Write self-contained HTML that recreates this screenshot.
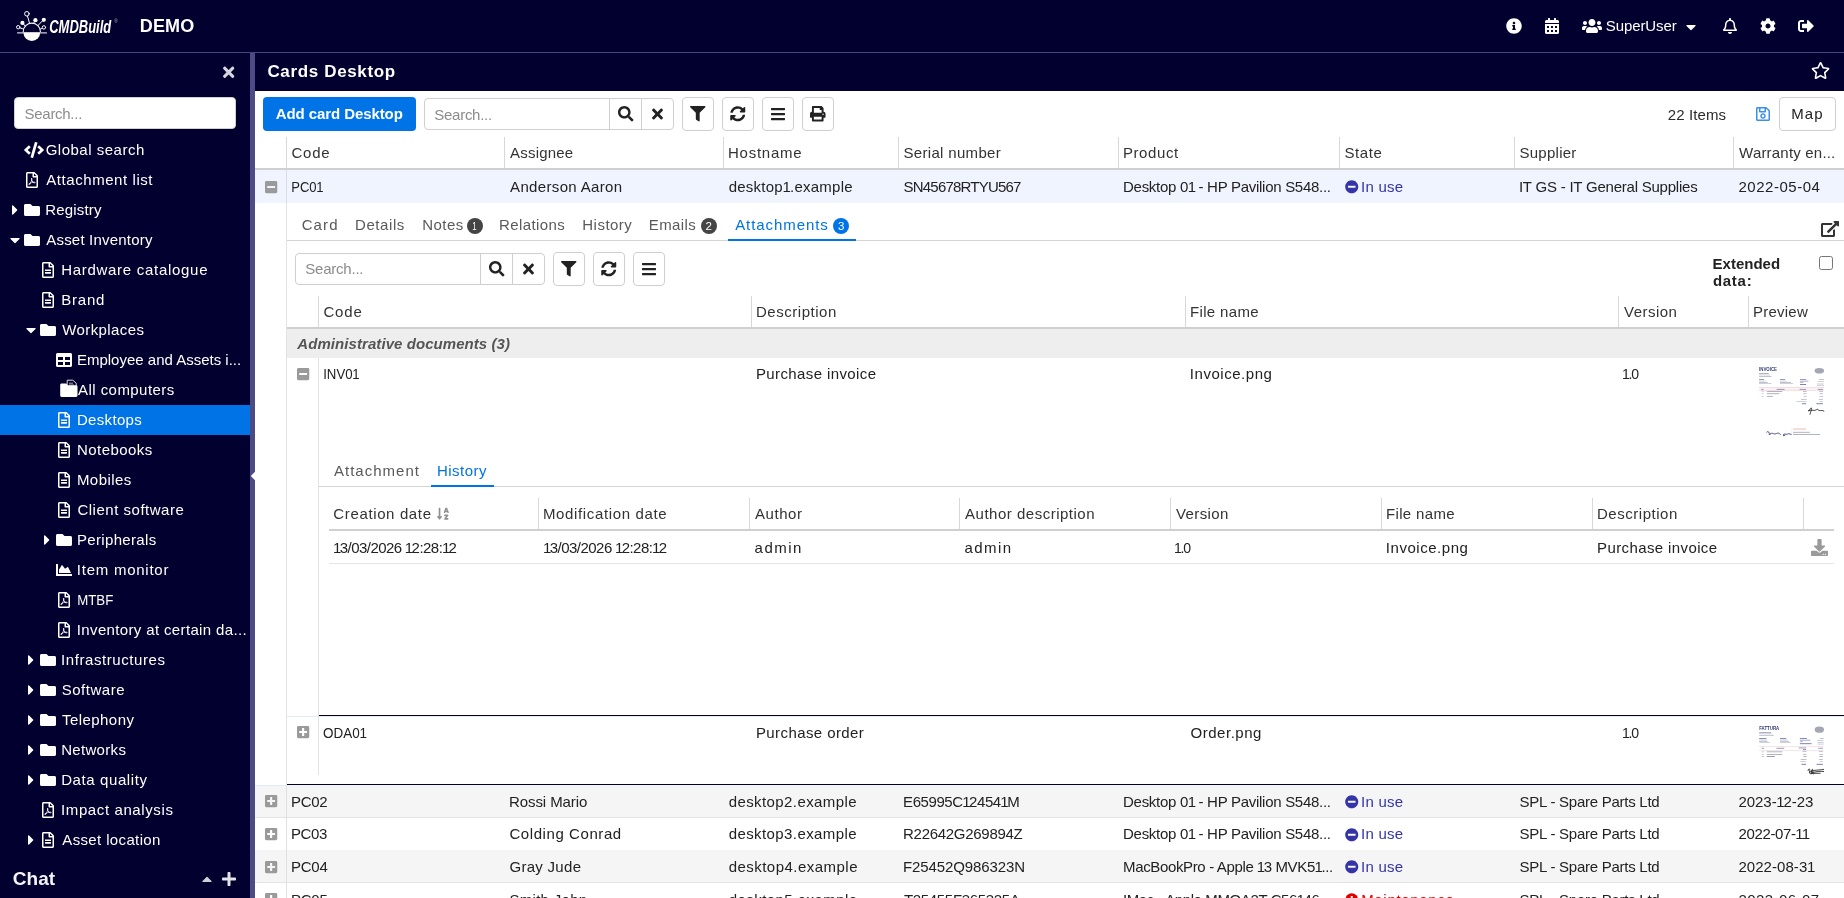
<!DOCTYPE html>
<html lang="en"><head><meta charset="utf-8"><title>CMDBuild - Cards Desktop</title>
<style>
html,body{margin:0;padding:0;}
body{width:1844px;height:898px;overflow:hidden;position:relative;background:#fff;font-family:"Liberation Sans",sans-serif;font-size:15px;color:#222;}
.b{position:absolute;box-sizing:border-box;}
.i{position:absolute;display:block;overflow:visible;}
.t{position:absolute;white-space:nowrap;line-height:20px;height:20px;letter-spacing:var(--ls,0px);}
.n1{letter-spacing:calc(var(--ls,0px) - 1.1px);margin-left:-0.4px;}
.btn{position:absolute;box-sizing:border-box;border:1px solid #cfcfcf;border-radius:4px;background:#fff;}
#app{position:absolute;left:0;top:0;width:1844px;height:898px;overflow:hidden;will-change:transform;}

</style></head>
<body>
<div id="app">
<div class="b" style="left:0px;top:0px;width:1844px;height:52px;background:#02002e;"></div>
<div class="b" style="left:0px;top:52px;width:1844px;height:1px;background:#45447f;"></div>
<svg class="i" style="left:13px;top:8px" width="38" height="36" viewBox="0 0 38 36">
<g stroke="#fff" stroke-width="1" fill="none" stroke-linecap="round" transform="translate(0,0.5)">
<path d="M10.2 23.2A8.6 8.6 0 0 1 27.4 23.2" stroke-width="1.1"/>
<line x1="4.5" y1="24.4" x2="33.5" y2="24.4" stroke-width="1.1" stroke="#cfcfdc"/>
<line x1="16.6" y1="14.9" x2="14.2" y2="6.6"/>
<line x1="20.6" y1="14.6" x2="22" y2="12.4"/>
<line x1="24.8" y1="17.2" x2="29.6" y2="12.2"/>
<line x1="12.2" y1="17.6" x2="10.4" y2="15.4"/>
<line x1="10.6" y1="20.6" x2="6.4" y2="19.2"/>
<line x1="27" y1="20.8" x2="29.6" y2="19.6"/>
<circle cx="13.9" cy="5.3" r="2.3" fill="#02002e"/>
<circle cx="5.2" cy="18.7" r="1.7" fill="#02002e"/>
<circle cx="30.9" cy="18.9" r="1.7" fill="#02002e"/>
</g>
<g fill="#fff">
<path d="M10.4 24.2A8.4 8.4 0 0 0 27.2 24.2Z" transform="translate(0,0.4)"/>
<circle cx="9.4" cy="14.9" r="2.1"/>
<circle cx="22.4" cy="12.2" r="2.1"/>
<circle cx="30.8" cy="11.8" r="2.1"/>
</g></svg>
<span class="t logo" id="t0" style="top:17px;font-size:18px;font-weight:700;color:#fff;font-style:italic;transform-origin:0 50%;left:49.42px;transform:scaleX(0.7204);transform-origin:0.88px 50%;">CMDBuild</span>
<span class="t" id="t1" style="top:12px;font-size:4.5px;color:#bbb;left:114.20px;">®</span>
<span class="t" id="t2" style="top:16px;font-size:18px;font-weight:700;color:#fff;left:139.75px;--ls:0.167px;">DEMO</span>
<svg class="i" style="left:1506px;top:18px;" width="16" height="16" viewBox="0 0 512 512" preserveAspectRatio="none"><path fill="#fff" d="M256 8C119.043 8 8 119.083 8 256c0 136.997 111.043 248 248 248s248-111.003 248-248C504 119.083 392.957 8 256 8zm0 110c23.196 0 42 18.804 42 42s-18.804 42-42 42-42-18.804-42-42 18.804-42 42-42zm56 254c0 6.627-5.373 12-12 12h-88c-6.627 0-12-5.373-12-12v-24c0-6.627 5.373-12 12-12h12v-64h-12c-6.627 0-12-5.373-12-12v-24c0-6.627 5.373-12 12-12h64c6.627 0 12 5.373 12 12v100h12c6.627 0 12 5.373 12 12v24z"/></svg>
<svg class="i" style="left:1545px;top:18px;" width="14" height="16" viewBox="0 0 448 512" preserveAspectRatio="none"><path fill="#fff" d="M0 464c0 26.500 21.500 48 48 48h352c26.500 0 48-21.500 48-48V192H0v272zm320-196c0-6.600 5.400-12 12-12h40c6.600 0 12 5.400 12 12v40c0 6.600-5.400 12-12 12h-40c-6.600 0-12-5.400-12-12v-40zm0 128c0-6.600 5.400-12 12-12h40c6.600 0 12 5.400 12 12v40c0 6.600-5.400 12-12 12h-40c-6.600 0-12-5.400-12-12v-40zM192 268c0-6.600 5.400-12 12-12h40c6.600 0 12 5.400 12 12v40c0 6.600-5.400 12-12 12h-40c-6.600 0-12-5.400-12-12v-40zm0 128c0-6.600 5.400-12 12-12h40c6.600 0 12 5.400 12 12v40c0 6.600-5.400 12-12 12h-40c-6.600 0-12-5.400-12-12v-40zM64 268c0-6.600 5.400-12 12-12h40c6.600 0 12 5.400 12 12v40c0 6.600-5.400 12-12 12H76c-6.600 0-12-5.400-12-12v-40zm0 128c0-6.600 5.400-12 12-12h40c6.600 0 12 5.400 12 12v40c0 6.600-5.400 12-12 12H76c-6.600 0-12-5.400-12-12v-40zM400 64h-48V16c0-8.800-7.200-16-16-16h-32c-8.800 0-16 7.200-16 16v48H160V16c0-8.800-7.200-16-16-16h-32c-8.800 0-16 7.200-16 16v48H48C21.500 64 0 85.500 0 112v48h448v-48c0-26.500-21.500-48-48-48z"/></svg>
<svg class="i" style="left:1581.5px;top:18px;" width="20" height="16" viewBox="0 0 640 512" preserveAspectRatio="none"><path fill="#fff" d="M96 224c35.300 0 64-28.700 64-64s-28.700-64-64-64-64 28.700-64 64 28.700 64 64 64zm448 0c35.300 0 64-28.700 64-64s-28.700-64-64-64-64 28.700-64 64 28.700 64 64 64zm32 32h-64c-17.600 0-33.500 7.100-45.100 18.600 40.300 22.100 68.900 62 75.100 109.400h66c17.700 0 32-14.300 32-32v-32c0-35.300-28.700-64-64-64zm-256 0c61.900 0 112-50.100 112-112S381.900 32 320 32 208 82.100 208 144s50.100 112 112 112zm76.800 32h-8.300c-20.800 10-43.900 16-68.500 16s-47.600-6-68.500-16h-8.300C179.600 288 128 339.600 128 403.200V432c0 26.500 21.500 48 48 48h288c26.500 0 48-21.500 48-48v-28.800c0-63.600-51.600-115.200-115.200-115.200zm-223.700-13.400C161.500 263.100 145.600 256 128 256H64c-35.300 0-64 28.700-64 64v32c0 17.700 14.300 32 32 32h65.900c6.300-47.400 34.900-87.300 75.200-109.400z"/></svg>
<span class="t" id="t3" style="top:16px;color:#fff;left:1605.75px;--ls:-0.094px;">SuperUser</span>
<svg class="i" style="left:1686px;top:18.5px;" width="10" height="16" viewBox="0 0 320 512" preserveAspectRatio="none"><path fill="#fff" d="M31.3 192h257.300c17.800 0 26.700 21.500 14.100 34.100L174.100 354.800c-7.800 7.800-20.500 7.800-28.300 0L17.200 226.100C4.600 213.500 13.500 192 31.300 192z"/></svg>
<svg class="i" style="left:1722.5px;top:18px;" width="14" height="16" viewBox="0 0 448 512" preserveAspectRatio="none"><path fill="#fff" d="M439.390 362.290c-19.320-20.760-55.470-51.990-55.470-154.290 0-77.700-54.480-139.900-127.940-155.160V32c0-17.670-14.320-32-31.980-32s-31.980 14.330-31.980 32v20.840C118.560 68.100 64.080 130.300 64.080 208c0 102.300-36.150 133.530-55.470 154.290-6 6.450-8.660 14.160-8.610 21.710.110 16.400 12.980 32 32.100 32h383.800c19.120 0 32-15.600 32.100-32 .050-7.550-2.610-15.270-8.610-21.710zM67.530 368c21.220-27.970 44.420-74.330 44.530-159.420 0-.2-.060-.380-.060-.580 0-61.860 50.140-112 112-112s112 50.140 112 112c0 .2-.060.380-.060.580.110 85.100 23.310 131.460 44.530 159.420H67.530zM224 512c35.320 0 63.970-28.650 63.970-64H160.030c0 35.350 28.650 64 63.970 64z"/></svg>
<svg class="i" style="left:1759.5px;top:18px;" width="16" height="16" viewBox="0 0 512 512" preserveAspectRatio="none"><path fill="#fff" d="M487.400 315.700l-42.600-24.600c4.300-23.200 4.300-47 0-70.200l42.600-24.600c4.900-2.800 7.100-8.600 5.500-14-11.100-35.600-30-67.800-54.700-94.600-3.800-4.100-10-5.100-14.800-2.300L380.800 110c-17.900-15.400-38.500-27.300-60.800-35.100V25.800c0-5.600-3.900-10.500-9.400-11.700-36.700-8.200-74.300-7.800-109.200 0-5.500 1.200-9.400 6.100-9.400 11.700V75c-22.200 7.900-42.800 19.800-60.800 35.100L88.700 85.500c-4.900-2.800-11-1.900-14.800 2.300-24.700 26.700-43.600 58.900-54.700 94.600-1.700 5.400.6 11.200 5.500 14L67.300 221c-4.300 23.200-4.300 47 0 70.200l-42.600 24.600c-4.900 2.800-7.100 8.600-5.500 14 11.100 35.600 30 67.800 54.700 94.600 3.800 4.100 10 5.100 14.800 2.300l42.600-24.600c17.900 15.400 38.500 27.300 60.800 35.100v49.200c0 5.600 3.900 10.500 9.400 11.700 36.700 8.200 74.300 7.800 109.200 0 5.500-1.200 9.400-6.100 9.400-11.700v-49.200c22.200-7.900 42.800-19.800 60.800-35.100l42.600 24.600c4.900 2.800 11 1.900 14.800-2.300 24.700-26.700 43.600-58.900 54.700-94.600 1.500-5.500-.7-11.300-5.600-14.100zM256 336c-44.100 0-80-35.900-80-80s35.900-80 80-80 80 35.900 80 80-35.900 80-80 80z"/></svg>
<svg class="i" style="left:1797.5px;top:18px;" width="16" height="16" viewBox="0 0 512 512" preserveAspectRatio="none"><path fill="#fff" d="M497 273L329 441c-15 15-41 4.500-41-17v-96H152c-13.300 0-24-10.700-24-24v-96c0-13.300 10.700-24 24-24h136V88c0-21.400 25.900-32 41-17l168 168c9.300 9.400 9.300 24.600 0 34zM192 436v-40c0-6.600-5.400-12-12-12H96c-17.700 0-32-14.300-32-32V160c0-17.700 14.300-32 32-32h84c6.600 0 12-5.400 12-12V76c0-6.600-5.400-12-12-12H96c-53 0-96 43-96 96v192c0 53 43 96 96 96h84c6.600 0 12-5.400 12-12z"/></svg>
<div class="b" style="left:0px;top:53px;width:250px;height:845px;background:#02002e;"></div>
<div class="b" style="left:250px;top:53px;width:5px;height:845px;background:#4d4b86;"></div>
<svg class="i" style="left:250px;top:471px" width="5" height="10" viewBox="0 0 5 10"><path d="M0.800 5L5 0.800V9.200Z" fill="#fff"/></svg>
<svg class="i" style="left:222.928px;top:63.95px;" width="11.3438" height="16.5" viewBox="0 0 352 512" preserveAspectRatio="none"><path fill="#d6d6de" d="M242.72 256l100.07-100.07c12.28-12.28 12.28-32.19 0-44.48l-22.24-22.24c-12.28-12.28-32.19-12.28-44.48 0L176 189.28 75.93 89.21c-12.28-12.28-32.19-12.28-44.48 0L9.21 111.45c-12.28 12.28-12.28 32.19 0 44.48L109.28 256 9.21 356.07c-12.28 12.28-12.28 32.19 0 44.48l22.24 22.24c12.28 12.28 32.2 12.28 44.48 0L176 322.72l100.07 100.07c12.28 12.28 32.2 12.28 44.48 0l22.24-22.24c12.28-12.28 12.28-32.19 0-44.48L242.72 256z"/></svg>
<div class="b" style="left:14px;top:97px;width:222px;height:32px;background:#fff;border:1px solid #d0d0d0;border-radius:4px;"></div>
<span class="t" id="t4" style="top:104px;color:#8c8c8c;left:24.55px;--ls:-0.284px;">Search...</span>
<svg class="i" style="left:24px;top:142px;" width="20" height="16" viewBox="0 0 640 512" preserveAspectRatio="none"><path fill="#fff" d="M278.900 511.500l-61-17.700c-6.400-1.800-10-8.500-8.200-14.900L346.200 8.700c1.800-6.400 8.500-10 14.900-8.200l61 17.700c6.400 1.800 10 8.500 8.200 14.900L293.800 503.300c-1.900 6.400-8.500 10.100-14.900 8.200zm-114-112.200l43.500-46.400c4.600-4.900 4.300-12.700-.8-17.200L117 256l90.600-79.700c5.100-4.500 5.500-12.300.8-17.200l-43.500-46.400c-4.500-4.800-12.100-5.100-17-.5L3.800 247.200c-5.100 4.700-5.100 12.800 0 17.500l144.100 135.100c4.900 4.600 12.500 4.400 17-.5zm327.200.6l144.100-135.100c5.100-4.700 5.100-12.800 0-17.500L492.100 112.100c-4.800-4.500-12.400-4.300-17 .5L431.600 159c-4.600 4.900-4.300 12.700.8 17.200L523 256l-90.600 79.700c-5.100 4.500-5.500 12.300-.8 17.200l43.500 46.400c4.500 4.900 12.100 5.100 17 .6z"/></svg>
<span class="t" id="t5" style="top:140px;color:#fff;left:45.65px;--ls:0.510px;">Global search</span>
<svg class="i" style="left:26px;top:172px;" width="12" height="16" viewBox="0 0 384 512" preserveAspectRatio="none"><path fill="#fff" d="M369.900 97.900L286 14C277 5 264.800-.1 252.100-.1H48C21.500 0 0 21.500 0 48v416c0 26.500 21.500 48 48 48h288c26.500 0 48-21.500 48-48V131.900c0-12.700-5.100-25-14.100-34zM332.100 128H256V51.900l76.100 76.100zM48 464V48h160v104c0 13.300 10.700 24 24 24h104v288H48zm250.200-143.700c-12.200-12-47-8.700-64.400-6.500-17.200-10.500-28.700-25-36.800-46.300 3.900-16.100 10.100-40.600 5.400-56-4.200-26.200-37.800-23.600-42.600-5.900-4.400 16.100-.4 38.500 7 67.100-10 23.900-24.900 56-35.400 74.400-20 10.300-47 26.200-51 46.200-3.300 15.800 26 55.200 76.100-31.200 22.400-7.400 46.800-16.500 68.400-20.100 18.900 10.200 41 17 55.800 17 25.500 0 28-28.200 17.500-38.700zm-198.100 77.800c5.100-13.700 24.500-29.500 30.400-35-19 30.300-30.400 35.700-30.400 35zm81.600-190.600c7.400 0 6.700 32.100 1.800 40.800-4.400-13.900-4.300-40.800-1.800-40.800zm-24.400 136.600c9.700-16.900 18-37 24.700-54.700 8.300 15.100 18.900 27.200 30.100 35.500-20.800 4.300-38.900 13.100-54.800 19.200zm131.600-5s-5 6-37.300-7.800c35.100-2.600 40.900 5.400 37.300 7.800z"/></svg>
<span class="t" id="t6" style="top:170px;color:#fff;left:46.27px;--ls:0.562px;">Attachment list</span>
<svg class="i" style="left:11.5px;top:202px;" width="6" height="16" viewBox="0 0 192 512" preserveAspectRatio="none"><path fill="#fff" d="M0 384.662V127.338c0-17.818 21.543-26.741 34.142-14.142l128.662 128.662c7.810 7.810 7.810 20.474 0 28.284L34.142 398.804C21.543 411.404 0 402.480 0 384.662z"/></svg>
<svg class="i" style="left:24px;top:202px;" width="16" height="16" viewBox="0 0 512 512" preserveAspectRatio="none"><path fill="#fff" d="M464 128H272l-64-64H48C21.490 64 0 85.490 0 112v288c0 26.510 21.490 48 48 48h416c26.510 0 48-21.490 48-48V176c0-26.510-21.490-48-48-48z"/></svg>
<span class="t" id="t7" style="top:200px;color:#fff;left:45.15px;--ls:0.179px;">Registry</span>
<svg class="i" style="left:10px;top:231.5px;" width="10" height="16" viewBox="0 0 320 512" preserveAspectRatio="none"><path fill="#fff" d="M31.3 192h257.300c17.800 0 26.700 21.500 14.100 34.100L174.100 354.800c-7.800 7.800-20.500 7.800-28.300 0L17.200 226.100C4.600 213.500 13.500 192 31.300 192z"/></svg>
<svg class="i" style="left:24px;top:232px;" width="16" height="16" viewBox="0 0 512 512" preserveAspectRatio="none"><path fill="#fff" d="M464 128H272l-64-64H48C21.490 64 0 85.490 0 112v288c0 26.510 21.490 48 48 48h416c26.510 0 48-21.490 48-48V176c0-26.510-21.490-48-48-48z"/></svg>
<span class="t" id="t8" style="top:230px;color:#fff;left:46.27px;--ls:0.196px;">Asset Inventory</span>
<svg class="i" style="left:42px;top:262px;" width="12" height="16" viewBox="0 0 384 512" preserveAspectRatio="none"><path fill="#fff" d="M288 248v28c0 6.600-5.400 12-12 12H108c-6.600 0-12-5.400-12-12v-28c0-6.600 5.400-12 12-12h168c6.600 0 12 5.400 12 12zm-12 72H108c-6.600 0-12 5.400-12 12v28c0 6.600 5.400 12 12 12h168c6.600 0 12-5.400 12-12v-28c0-6.600-5.400-12-12-12zm108-188.100V464c0 26.500-21.500 48-48 48H48c-26.500 0-48-21.500-48-48V48C0 21.500 21.500 0 48 0h204.100C264.800 0 277 5.100 286 14.100L369.900 98c9 8.900 14.100 21.200 14.100 33.900zm-128-80V128h76.100L256 51.900zM336 464V176H232c-13.300 0-24-10.700-24-24V48H48v416h288z"/></svg>
<span class="t" id="t9" style="top:260px;color:#fff;left:61.15px;--ls:0.713px;">Hardware catalogue</span>
<svg class="i" style="left:42px;top:292px;" width="12" height="16" viewBox="0 0 384 512" preserveAspectRatio="none"><path fill="#fff" d="M288 248v28c0 6.600-5.400 12-12 12H108c-6.600 0-12-5.400-12-12v-28c0-6.600 5.400-12 12-12h168c6.600 0 12 5.400 12 12zm-12 72H108c-6.600 0-12 5.400-12 12v28c0 6.600 5.400 12 12 12h168c6.600 0 12-5.400 12-12v-28c0-6.600-5.400-12-12-12zm108-188.100V464c0 26.500-21.500 48-48 48H48c-26.500 0-48-21.500-48-48V48C0 21.500 21.500 0 48 0h204.100C264.800 0 277 5.100 286 14.100L369.900 98c9 8.900 14.100 21.200 14.100 33.900zm-128-80V128h76.100L256 51.900zM336 464V176H232c-13.300 0-24-10.700-24-24V48H48v416h288z"/></svg>
<span class="t" id="t10" style="top:290px;color:#fff;left:61.15px;--ls:0.812px;">Brand</span>
<svg class="i" style="left:26px;top:321.5px;" width="10" height="16" viewBox="0 0 320 512" preserveAspectRatio="none"><path fill="#fff" d="M31.3 192h257.300c17.800 0 26.700 21.500 14.100 34.100L174.100 354.800c-7.800 7.800-20.500 7.800-28.300 0L17.200 226.100C4.600 213.500 13.500 192 31.300 192z"/></svg>
<svg class="i" style="left:40px;top:322px;" width="16" height="16" viewBox="0 0 512 512" preserveAspectRatio="none"><path fill="#fff" d="M464 128H272l-64-64H48C21.490 64 0 85.490 0 112v288c0 26.510 21.490 48 48 48h416c26.510 0 48-21.490 48-48V176c0-26.510-21.490-48-48-48z"/></svg>
<span class="t" id="t11" style="top:320px;color:#fff;left:62.27px;--ls:0.403px;">Workplaces</span>
<svg class="i" style="left:56px;top:352px;" width="16" height="16" viewBox="0 0 512 512" preserveAspectRatio="none"><path fill="#fff" d="M464 32H48C21.490 32 0 53.490 0 80v352c0 26.510 21.490 48 48 48h416c26.510 0 48-21.490 48-48V80c0-26.510-21.490-48-48-48zM224 416H64v-96h160v96zm0-160H64v-96h160v96zm224 160H288v-96h160v96zm0-160H288v-96h160v96z"/></svg>
<span class="t" id="t12" style="top:350px;color:#fff;left:76.95px;--ls:0.000px;">Employee and Assets i...</span>
<svg class="i" style="left:59px;top:379px" width="20" height="20" viewBox="0 0 20 20">
<path d="M8.2 1.2h5.6l3.4 3v6.6H8.2z" fill="#02002e" stroke="#ddd" stroke-width="1"/>
<path d="M10 4.2h4M10 6h5" stroke="#ccc" stroke-width="0.8"/>
<path d="M2.6 4.6h4.6l1.6 1.7h8.3c.8 0 1.4.6 1.4 1.4v8.8c0 .8-.6 1.4-1.4 1.4H2.6c-.8 0-1.4-.6-1.4-1.4V6c0-.8.6-1.4 1.4-1.4z" fill="#fff"/></svg>
<span class="t" id="t13" style="top:380px;color:#fff;left:78.08px;--ls:0.438px;">All computers</span>
<div class="b" style="left:0px;top:405px;width:250px;height:30px;background:#0073e6;"></div>
<svg class="i" style="left:58px;top:412px;" width="12" height="16" viewBox="0 0 384 512" preserveAspectRatio="none"><path fill="#fff" d="M288 248v28c0 6.600-5.400 12-12 12H108c-6.600 0-12-5.400-12-12v-28c0-6.600 5.400-12 12-12h168c6.600 0 12 5.400 12 12zm-12 72H108c-6.600 0-12 5.400-12 12v28c0 6.600 5.400 12 12 12h168c6.600 0 12-5.400 12-12v-28c0-6.600-5.400-12-12-12zm108-188.100V464c0 26.500-21.500 48-48 48H48c-26.500 0-48-21.500-48-48V48C0 21.500 21.500 0 48 0h204.100C264.800 0 277 5.100 286 14.100L369.900 98c9 8.900 14.100 21.200 14.100 33.900zm-128-80V128h76.100L256 51.900zM336 464V176H232c-13.300 0-24-10.700-24-24V48H48v416h288z"/></svg>
<span class="t" id="t14" style="top:410px;color:#fff;left:76.95px;--ls:0.321px;">Desktops</span>
<svg class="i" style="left:58px;top:442px;" width="12" height="16" viewBox="0 0 384 512" preserveAspectRatio="none"><path fill="#fff" d="M288 248v28c0 6.600-5.400 12-12 12H108c-6.600 0-12-5.400-12-12v-28c0-6.600 5.400-12 12-12h168c6.600 0 12 5.400 12 12zm-12 72H108c-6.600 0-12 5.400-12 12v28c0 6.600 5.400 12 12 12h168c6.600 0 12-5.400 12-12v-28c0-6.600-5.400-12-12-12zm108-188.100V464c0 26.500-21.500 48-48 48H48c-26.500 0-48-21.500-48-48V48C0 21.500 21.500 0 48 0h204.100C264.800 0 277 5.100 286 14.100L369.900 98c9 8.900 14.100 21.200 14.100 33.900zm-128-80V128h76.100L256 51.900zM336 464V176H232c-13.300 0-24-10.700-24-24V48H48v416h288z"/></svg>
<span class="t" id="t15" style="top:440px;color:#fff;left:76.95px;--ls:0.453px;">Notebooks</span>
<svg class="i" style="left:58px;top:472px;" width="12" height="16" viewBox="0 0 384 512" preserveAspectRatio="none"><path fill="#fff" d="M288 248v28c0 6.600-5.400 12-12 12H108c-6.600 0-12-5.400-12-12v-28c0-6.600 5.400-12 12-12h168c6.600 0 12 5.400 12 12zm-12 72H108c-6.600 0-12 5.400-12 12v28c0 6.600 5.400 12 12 12h168c6.600 0 12-5.400 12-12v-28c0-6.600-5.400-12-12-12zm108-188.100V464c0 26.500-21.500 48-48 48H48c-26.500 0-48-21.500-48-48V48C0 21.500 21.500 0 48 0h204.100C264.800 0 277 5.100 286 14.100L369.900 98c9 8.900 14.100 21.200 14.100 33.900zm-128-80V128h76.100L256 51.900zM336 464V176H232c-13.300 0-24-10.700-24-24V48H48v416h288z"/></svg>
<span class="t" id="t16" style="top:470px;color:#fff;left:76.95px;--ls:0.438px;">Mobiles</span>
<svg class="i" style="left:58px;top:502px;" width="12" height="16" viewBox="0 0 384 512" preserveAspectRatio="none"><path fill="#fff" d="M288 248v28c0 6.600-5.400 12-12 12H108c-6.600 0-12-5.400-12-12v-28c0-6.600 5.400-12 12-12h168c6.600 0 12 5.400 12 12zm-12 72H108c-6.600 0-12 5.400-12 12v28c0 6.600 5.400 12 12 12h168c6.600 0 12-5.400 12-12v-28c0-6.600-5.400-12-12-12zm108-188.100V464c0 26.500-21.500 48-48 48H48c-26.500 0-48-21.500-48-48V48C0 21.500 21.500 0 48 0h204.100C264.800 0 277 5.100 286 14.100L369.900 98c9 8.900 14.100 21.200 14.100 33.900zm-128-80V128h76.100L256 51.900zM336 464V176H232c-13.300 0-24-10.700-24-24V48H48v416h288z"/></svg>
<span class="t" id="t17" style="top:500px;color:#fff;left:77.45px;--ls:0.509px;">Client software</span>
<svg class="i" style="left:43.5px;top:532px;" width="6" height="16" viewBox="0 0 192 512" preserveAspectRatio="none"><path fill="#fff" d="M0 384.662V127.338c0-17.818 21.543-26.741 34.142-14.142l128.662 128.662c7.810 7.810 7.810 20.474 0 28.284L34.142 398.804C21.543 411.404 0 402.480 0 384.662z"/></svg>
<svg class="i" style="left:56px;top:532px;" width="16" height="16" viewBox="0 0 512 512" preserveAspectRatio="none"><path fill="#fff" d="M464 128H272l-64-64H48C21.490 64 0 85.490 0 112v288c0 26.510 21.490 48 48 48h416c26.510 0 48-21.490 48-48V176c0-26.510-21.490-48-48-48z"/></svg>
<span class="t" id="t18" style="top:530px;color:#fff;left:76.95px;--ls:0.338px;">Peripherals</span>
<svg class="i" style="left:56px;top:562px;" width="16" height="16" viewBox="0 0 512 512" preserveAspectRatio="none"><path fill="#fff" d="M500 384c6.600 0 12 5.400 12 12v40c0 6.600-5.400 12-12 12H12c-6.600 0-12-5.400-12-12V76c0-6.600 5.400-12 12-12h40c6.600 0 12 5.400 12 12v308h436zM372.700 159.500L288 216l-85.300-113.700c-5.100-6.800-15.500-6.300-19.900 1L96 248v104h384l-89.900-187.800c-3.200-6.500-11.400-8.700-17.400-4.700z"/></svg>
<span class="t" id="t19" style="top:560px;color:#fff;left:76.83px;--ls:0.750px;">Item monitor</span>
<svg class="i" style="left:58px;top:592px;" width="12" height="16" viewBox="0 0 384 512" preserveAspectRatio="none"><path fill="#fff" d="M369.900 97.900L286 14C277 5 264.800-.1 252.100-.1H48C21.500 0 0 21.500 0 48v416c0 26.500 21.500 48 48 48h288c26.500 0 48-21.500 48-48V131.900c0-12.700-5.100-25-14.100-34zM332.100 128H256V51.900l76.100 76.100zM48 464V48h160v104c0 13.300 10.700 24 24 24h104v288H48zm250.200-143.700c-12.200-12-47-8.700-64.400-6.500-17.200-10.500-28.700-25-36.800-46.300 3.900-16.100 10.100-40.600 5.400-56-4.200-26.200-37.800-23.600-42.600-5.900-4.400 16.100-.4 38.500 7 67.100-10 23.900-24.900 56-35.400 74.400-20 10.300-47 26.200-51 46.200-3.300 15.800 26 55.200 76.100-31.200 22.400-7.400 46.800-16.500 68.400-20.100 18.900 10.200 41 17 55.800 17 25.500 0 28-28.200 17.500-38.700zm-198.100 77.800c5.100-13.700 24.500-29.500 30.400-35-19 30.300-30.400 35.700-30.400 35zm81.600-190.600c7.400 0 6.700 32.100 1.800 40.800-4.400-13.900-4.300-40.800-1.800-40.800zm-24.400 136.600c9.700-16.900 18-37 24.700-54.700 8.300 15.100 18.900 27.200 30.100 35.500-20.800 4.300-38.900 13.100-54.800 19.200zm131.600-5s-5 6-37.300-7.800c35.100-2.600 40.900 5.400 37.300 7.800z"/></svg>
<span class="t" id="t20" style="top:590px;color:#fff;left:76.95px;transform:scaleX(0.8846);transform-origin:1.25px 50%;">MTBF</span>
<svg class="i" style="left:58px;top:622px;" width="12" height="16" viewBox="0 0 384 512" preserveAspectRatio="none"><path fill="#fff" d="M369.900 97.900L286 14C277 5 264.800-.1 252.100-.1H48C21.500 0 0 21.500 0 48v416c0 26.500 21.500 48 48 48h288c26.500 0 48-21.500 48-48V131.900c0-12.700-5.100-25-14.100-34zM332.100 128H256V51.900l76.100 76.100zM48 464V48h160v104c0 13.300 10.700 24 24 24h104v288H48zm250.200-143.700c-12.200-12-47-8.700-64.400-6.500-17.200-10.500-28.700-25-36.800-46.300 3.900-16.100 10.100-40.600 5.400-56-4.200-26.200-37.800-23.600-42.600-5.900-4.400 16.100-.4 38.500 7 67.100-10 23.900-24.900 56-35.400 74.400-20 10.300-47 26.200-51 46.200-3.300 15.800 26 55.200 76.100-31.200 22.400-7.400 46.800-16.500 68.400-20.100 18.900 10.200 41 17 55.800 17 25.500 0 28-28.200 17.500-38.700zm-198.100 77.800c5.100-13.700 24.500-29.500 30.400-35-19 30.300-30.400 35.700-30.400 35zm81.600-190.600c7.400 0 6.700 32.100 1.800 40.800-4.400-13.900-4.300-40.800-1.800-40.800zm-24.400 136.600c9.700-16.900 18-37 24.700-54.700 8.300 15.100 18.900 27.200 30.100 35.500-20.800 4.300-38.900 13.100-54.800 19.200zm131.600-5s-5 6-37.300-7.800c35.100-2.600 40.900 5.400 37.300 7.800z"/></svg>
<span class="t" id="t21" style="top:620px;color:#fff;left:76.83px;--ls:0.355px;">Inventory at certain da...</span>
<svg class="i" style="left:27.5px;top:652px;" width="6" height="16" viewBox="0 0 192 512" preserveAspectRatio="none"><path fill="#fff" d="M0 384.662V127.338c0-17.818 21.543-26.741 34.142-14.142l128.662 128.662c7.810 7.810 7.810 20.474 0 28.284L34.142 398.804C21.543 411.404 0 402.480 0 384.662z"/></svg>
<svg class="i" style="left:40px;top:652px;" width="16" height="16" viewBox="0 0 512 512" preserveAspectRatio="none"><path fill="#fff" d="M464 128H272l-64-64H48C21.490 64 0 85.490 0 112v288c0 26.510 21.490 48 48 48h416c26.510 0 48-21.490 48-48V176c0-26.510-21.490-48-48-48z"/></svg>
<span class="t" id="t22" style="top:650px;color:#fff;left:61.02px;--ls:0.571px;">Infrastructures</span>
<svg class="i" style="left:27.5px;top:682px;" width="6" height="16" viewBox="0 0 192 512" preserveAspectRatio="none"><path fill="#fff" d="M0 384.662V127.338c0-17.818 21.543-26.741 34.142-14.142l128.662 128.662c7.810 7.810 7.810 20.474 0 28.284L34.142 398.804C21.543 411.404 0 402.480 0 384.662z"/></svg>
<svg class="i" style="left:40px;top:682px;" width="16" height="16" viewBox="0 0 512 512" preserveAspectRatio="none"><path fill="#fff" d="M464 128H272l-64-64H48C21.490 64 0 85.490 0 112v288c0 26.510 21.490 48 48 48h416c26.510 0 48-21.490 48-48V176c0-26.510-21.490-48-48-48z"/></svg>
<span class="t" id="t23" style="top:680px;color:#fff;left:61.65px;--ls:0.536px;">Software</span>
<svg class="i" style="left:27.5px;top:712px;" width="6" height="16" viewBox="0 0 192 512" preserveAspectRatio="none"><path fill="#fff" d="M0 384.662V127.338c0-17.818 21.543-26.741 34.142-14.142l128.662 128.662c7.810 7.810 7.810 20.474 0 28.284L34.142 398.804C21.543 411.404 0 402.480 0 384.662z"/></svg>
<svg class="i" style="left:40px;top:712px;" width="16" height="16" viewBox="0 0 512 512" preserveAspectRatio="none"><path fill="#fff" d="M464 128H272l-64-64H48C21.490 64 0 85.490 0 112v288c0 26.510 21.490 48 48 48h416c26.510 0 48-21.490 48-48V176c0-26.510-21.490-48-48-48z"/></svg>
<span class="t" id="t24" style="top:710px;color:#fff;left:62.02px;--ls:0.438px;">Telephony</span>
<svg class="i" style="left:27.5px;top:742px;" width="6" height="16" viewBox="0 0 192 512" preserveAspectRatio="none"><path fill="#fff" d="M0 384.662V127.338c0-17.818 21.543-26.741 34.142-14.142l128.662 128.662c7.810 7.810 7.810 20.474 0 28.284L34.142 398.804C21.543 411.404 0 402.480 0 384.662z"/></svg>
<svg class="i" style="left:40px;top:742px;" width="16" height="16" viewBox="0 0 512 512" preserveAspectRatio="none"><path fill="#fff" d="M464 128H272l-64-64H48C21.490 64 0 85.490 0 112v288c0 26.510 21.490 48 48 48h416c26.510 0 48-21.490 48-48V176c0-26.510-21.490-48-48-48z"/></svg>
<span class="t" id="t25" style="top:740px;color:#fff;left:61.15px;--ls:0.321px;">Networks</span>
<svg class="i" style="left:27.5px;top:772px;" width="6" height="16" viewBox="0 0 192 512" preserveAspectRatio="none"><path fill="#fff" d="M0 384.662V127.338c0-17.818 21.543-26.741 34.142-14.142l128.662 128.662c7.810 7.810 7.810 20.474 0 28.284L34.142 398.804C21.543 411.404 0 402.480 0 384.662z"/></svg>
<svg class="i" style="left:40px;top:772px;" width="16" height="16" viewBox="0 0 512 512" preserveAspectRatio="none"><path fill="#fff" d="M464 128H272l-64-64H48C21.490 64 0 85.490 0 112v288c0 26.510 21.490 48 48 48h416c26.510 0 48-21.490 48-48V176c0-26.510-21.490-48-48-48z"/></svg>
<span class="t" id="t26" style="top:770px;color:#fff;left:61.15px;--ls:0.602px;">Data quality</span>
<svg class="i" style="left:42px;top:802px;" width="12" height="16" viewBox="0 0 384 512" preserveAspectRatio="none"><path fill="#fff" d="M369.900 97.900L286 14C277 5 264.800-.1 252.100-.1H48C21.500 0 0 21.500 0 48v416c0 26.500 21.500 48 48 48h288c26.500 0 48-21.500 48-48V131.900c0-12.700-5.100-25-14.100-34zM332.100 128H256V51.900l76.100 76.100zM48 464V48h160v104c0 13.300 10.700 24 24 24h104v288H48zm250.200-143.700c-12.200-12-47-8.700-64.400-6.500-17.200-10.500-28.700-25-36.800-46.300 3.900-16.100 10.100-40.600 5.400-56-4.200-26.200-37.800-23.600-42.600-5.900-4.400 16.100-.4 38.500 7 67.100-10 23.900-24.900 56-35.400 74.400-20 10.300-47 26.200-51 46.200-3.300 15.800 26 55.200 76.100-31.200 22.400-7.400 46.800-16.500 68.400-20.100 18.900 10.200 41 17 55.800 17 25.500 0 28-28.200 17.500-38.700zm-198.100 77.800c5.100-13.700 24.500-29.500 30.400-35-19 30.300-30.400 35.700-30.400 35zm81.600-190.600c7.400 0 6.700 32.100 1.800 40.800-4.400-13.900-4.300-40.800-1.800-40.800zm-24.400 136.600c9.700-16.900 18-37 24.700-54.700 8.300 15.100 18.900 27.200 30.100 35.500-20.800 4.300-38.900 13.100-54.800 19.200zm131.600-5s-5 6-37.300-7.800c35.100-2.600 40.900 5.400 37.300 7.800z"/></svg>
<span class="t" id="t27" style="top:800px;color:#fff;left:61.02px;--ls:0.607px;">Impact analysis</span>
<svg class="i" style="left:27.5px;top:832px;" width="6" height="16" viewBox="0 0 192 512" preserveAspectRatio="none"><path fill="#fff" d="M0 384.662V127.338c0-17.818 21.543-26.741 34.142-14.142l128.662 128.662c7.810 7.810 7.810 20.474 0 28.284L34.142 398.804C21.543 411.404 0 402.480 0 384.662z"/></svg>
<svg class="i" style="left:42px;top:832px;" width="12" height="16" viewBox="0 0 384 512" preserveAspectRatio="none"><path fill="#fff" d="M288 248v28c0 6.600-5.400 12-12 12H108c-6.600 0-12-5.400-12-12v-28c0-6.600 5.400-12 12-12h168c6.600 0 12 5.400 12 12zm-12 72H108c-6.600 0-12 5.400-12 12v28c0 6.600 5.400 12 12 12h168c6.600 0 12-5.400 12-12v-28c0-6.600-5.400-12-12-12zm108-188.100V464c0 26.500-21.500 48-48 48H48c-26.500 0-48-21.500-48-48V48C0 21.500 21.500 0 48 0h204.100C264.800 0 277 5.100 286 14.100L369.900 98c9 8.900 14.100 21.200 14.100 33.900zm-128-80V128h76.100L256 51.900zM336 464V176H232c-13.300 0-24-10.700-24-24V48H48v416h288z"/></svg>
<span class="t" id="t28" style="top:830px;color:#fff;left:62.27px;--ls:0.365px;">Asset location</span>
<span class="t" id="t29" style="top:869px;font-size:19px;font-weight:700;color:#f4f4f8;left:12.65px;--ls:0.083px;">Chat</span>
<svg class="i" style="left:202px;top:870.7px;" width="10" height="16" viewBox="0 0 320 512" preserveAspectRatio="none"><path fill="#cfcfd8" d="M288.662 352H31.338c-17.818 0-26.741-21.543-14.142-34.142l128.662-128.662c7.810-7.810 20.474-7.810 28.284 0l128.662 128.662c12.600 12.599 3.676 34.142-14.142 34.142z"/></svg>
<svg class="i" style="left:221.6px;top:870.6px;" width="14" height="16" viewBox="0 0 448 512" preserveAspectRatio="none"><path fill="#e4e4ea" d="M416 208H272V64c0-17.670-14.330-32-32-32h-32c-17.670 0-32 14.330-32 32v144H32c-17.670 0-32 14.330-32 32v32c0 17.670 14.330 32 32 32h144v144c0 17.670 14.330 32 32 32h32c17.670 0 32-14.330 32-32V304h144c17.670 0 32-14.330 32-32v-32c0-17.670-14.330-32-32-32z"/></svg>
<div class="b" style="left:255px;top:53px;width:1589px;height:38px;background:#02002e;"></div>
<span class="t" id="t30" style="top:62px;font-size:17px;font-weight:700;color:#fff;left:267.38px;--ls:0.656px;">Cards Desktop</span>
<svg class="i" style="left:1811.44px;top:62.3px;" width="19.125" height="17" viewBox="0 0 576 512" preserveAspectRatio="none"><path fill="#fff" d="M528.1 171.500L382 150.200 316.700 17.800c-11.700-23.600-45.600-23.900-57.400 0L194 150.200 47.900 171.500c-26.200 3.800-36.700 36.100-17.700 54.600l105.700 103-25 145.500c-4.500 26.300 23.200 46 46.400 33.700L288 439.600l130.700 68.700c23.200 12.200 50.900-7.400 46.400-33.700l-25-145.500 105.700-103c19-18.500 8.500-50.800-17.700-54.600zM388.600 312.300l23.700 138.400L288 385.400l-124.300 65.300 23.700-138.400-100.600-98 139-20.200 62.200-126 62.200 126 139 20.200-100.600 98z"/></svg>
<div class="b" style="left:263px;top:97px;width:153px;height:33.5px;background:#0073e6;border-radius:4px;"></div>
<span class="t" id="t31" style="top:104px;font-weight:700;color:#fff;left:275.82px;--ls:-0.092px;">Add card Desktop</span>
<div class="b" style="left:424px;top:98px;width:250px;height:32px;border:1px solid #cfcfcf;border-radius:4px;"></div>
<div class="b" style="left:609px;top:98px;width:1px;height:32px;background:#cfcfcf;"></div>
<div class="b" style="left:641px;top:98px;width:1px;height:32px;background:#cfcfcf;"></div>
<span class="t" id="t32" style="top:105px;color:#8c8c8c;left:434.35px;--ls:-0.284px;">Search...</span>
<svg class="i" style="left:617.75px;top:106.25px;" width="15.5" height="15.5" viewBox="0 0 512 512" preserveAspectRatio="none"><path fill="#222" d="M505 442.7L405.3 343c-4.500-4.500-10.600-7-17-7H372c27.600-35.300 44-79.700 44-128C416 93.100 322.900 0 208 0S0 93.100 0 208s93.100 208 208 208c48.300 0 92.700-16.400 128-44v16.300c0 6.400 2.500 12.500 7 17l99.700 99.700c9.400 9.400 24.600 9.400 33.900 0l28.300-28.300c9.400-9.400 9.400-24.600.1-34zM208 336c-70.700 0-128-57.200-128-128 0-70.700 57.200-128 128-128 70.700 0 128 57.200 128 128 0 70.700-57.200 128-128 128z"/></svg>
<svg class="i" style="left:652px;top:106px;" width="11" height="16" viewBox="0 0 352 512" preserveAspectRatio="none"><path fill="#222" d="M242.72 256l100.07-100.07c12.28-12.28 12.28-32.19 0-44.48l-22.24-22.24c-12.28-12.28-32.19-12.28-44.48 0L176 189.28 75.93 89.21c-12.28-12.28-32.19-12.28-44.48 0L9.21 111.45c-12.28 12.28-12.28 32.19 0 44.48L109.28 256 9.21 356.07c-12.28 12.28-12.28 32.19 0 44.48l22.24 22.24c12.28 12.28 32.2 12.28 44.48 0L176 322.72l100.07 100.07c12.28 12.28 32.2 12.28 44.48 0l22.24-22.24c12.28-12.28 12.28-32.19 0-44.48L242.72 256z"/></svg>
<div class="b" style="left:682px;top:97.25px;width:32px;height:33.25px;border:1px solid #cfcfcf;border-radius:4px;"></div>
<svg class="i" style="left:690.25px;top:106.25px;" width="15.5" height="15.5" viewBox="0 0 512 512" preserveAspectRatio="none"><path fill="#222" d="M487.976 0H24.028C2.710 0-8.047 25.866 7.058 40.971L192 225.941V432c0 7.831 3.821 15.170 10.237 19.662l80 55.980C298.020 518.690 320 507.493 320 487.980V225.941l184.947-184.970C520.021 25.896 509.338 0 487.976 0z"/></svg>
<div class="b" style="left:722px;top:97.25px;width:32px;height:33.25px;border:1px solid #cfcfcf;border-radius:4px;"></div>
<svg class="i" style="left:730.25px;top:106.25px;" width="15.5" height="15.5" viewBox="0 0 512 512" preserveAspectRatio="none"><path fill="#222" d="M370.72 133.28C339.458 104.008 298.888 87.962 255.848 88c-77.458.068-144.328 53.178-162.791 126.850-1.344 5.363-6.122 9.150-11.651 9.150H24.103c-7.498 0-13.194-6.807-11.807-14.176C33.933 94.924 134.813 8 256 8c66.448 0 126.791 26.136 171.315 68.685L463.030 40.970C478.149 25.851 504 36.559 504 57.941V192c0 13.255-10.745 24-24 24H345.941c-21.382 0-32.090-25.851-16.971-40.971l41.750-41.749zM32 296h134.059c21.382 0 32.090 25.851 16.971 40.971l-41.750 41.750c31.262 29.273 71.835 45.319 114.876 45.280 77.418-.07 144.315-53.144 162.787-126.849 1.344-5.363 6.122-9.150 11.651-9.150h57.304c7.498 0 13.194 6.807 11.807 14.176C478.067 417.076 377.187 504 256 504c-66.448 0-126.791-26.136-171.315-68.685L48.970 471.030C33.851 486.149 8 475.441 8 454.059V320c0-13.255 10.745-24 24-24z"/></svg>
<div class="b" style="left:762px;top:97.25px;width:32px;height:33.25px;border:1px solid #cfcfcf;border-radius:4px;"></div>
<svg class="i" style="left:771px;top:106px;" width="14" height="16" viewBox="0 0 448 512" preserveAspectRatio="none"><path fill="#222" d="M16 132h416c8.837 0 16-7.163 16-16V76c0-8.837-7.163-16-16-16H16C7.163 60 0 67.163 0 76v40c0 8.837 7.163 16 16 16zm0 160h416c8.837 0 16-7.163 16-16v-40c0-8.837-7.163-16-16-16H16c-8.837 0-16 7.163-16 16v40c0 8.837 7.163 16 16 16zm0 160h416c8.837 0 16-7.163 16-16v-40c0-8.837-7.163-16-16-16H16c-8.837 0-16 7.163-16 16v40c0 8.837 7.163 16 16 16z"/></svg>
<div class="b" style="left:802px;top:97.25px;width:32px;height:33.25px;border:1px solid #cfcfcf;border-radius:4px;"></div>
<svg class="i" style="left:810.25px;top:106.25px;" width="15.5" height="15.5" viewBox="0 0 512 512" preserveAspectRatio="none"><path fill="#222" d="M448 192V77.250c0-8.490-3.370-16.620-9.370-22.630L393.370 9.370c-6-6-14.140-9.370-22.630-9.370H96C78.330 0 64 14.330 64 32v160c-35.350 0-64 28.650-64 64v112c0 8.840 7.160 16 16 16h48v96c0 17.670 14.330 32 32 32h320c17.670 0 32-14.330 32-32v-96h48c8.840 0 16-7.160 16-16V256c0-35.350-28.650-64-64-64zm-64 256H128v-96h256v96zm0-224H128V64h192v48c0 8.840 7.160 16 16 16h48v96zm48 72c-13.250 0-24-10.750-24-24 0-13.260 10.750-24 24-24s24 10.740 24 24c0 13.250-10.750 24-24 24z"/></svg>
<span class="t" id="t33" style="top:105px;color:#2b2b2b;left:1667.75px;--ls:0.121px;">22 Items</span>
<svg class="i" style="left:1755.5px;top:106.25px;" width="14" height="16" viewBox="0 0 448 512" preserveAspectRatio="none"><path fill="#3b8eea" d="M433.941 129.941l-83.882-83.882A48 48 0 0 0 316.118 32H48C21.490 32 0 53.490 0 80v352c0 26.510 21.490 48 48 48h352c26.510 0 48-21.490 48-48V163.882a48 48 0 0 0-14.059-33.941zM272 80v80H144V80h128zm122 352H54a6 6 0 0 1-6-6V86a6 6 0 0 1 6-6h42v104c0 13.255 10.745 24 24 24h176c13.255 0 24-10.745 24-24V83.882l78.243 78.243a6 6 0 0 1 1.757 4.243V426a6 6 0 0 1-6 6zM224 232c-48.523 0-88 39.477-88 88s39.477 88 88 88 88-39.477 88-88-39.477-88-88-88zm0 128c-22.056 0-40-17.944-40-40s17.944-40 40-40 40 17.944 40 40-17.944 40-40 40z"/></svg>
<div class="b" style="left:1779px;top:97px;width:56.5px;height:33.5px;border:1px solid #cfcfcf;border-radius:4px;"></div>
<span class="t" id="t34" style="top:104px;left:1791.25px;--ls:1.113px;">Map</span>
<div class="b" style="left:286px;top:137px;width:1px;height:31px;background:#d8d8d8;"></div>
<span class="t" id="t35" style="top:143px;color:#333;left:291.45px;--ls:0.800px;">Code</span>
<div class="b" style="left:504px;top:137px;width:1px;height:31px;background:#d8d8d8;"></div>
<span class="t" id="t36" style="top:143px;color:#333;left:510.07px;--ls:0.200px;">Assignee</span>
<div class="b" style="left:723px;top:137px;width:1px;height:31px;background:#d8d8d8;"></div>
<span class="t" id="t37" style="top:143px;color:#333;left:727.95px;--ls:0.757px;">Hostname</span>
<div class="b" style="left:898px;top:137px;width:1px;height:31px;background:#d8d8d8;"></div>
<span class="t" id="t38" style="top:143px;color:#333;left:903.45px;--ls:0.327px;">Serial number</span>
<div class="b" style="left:1118px;top:137px;width:1px;height:31px;background:#d8d8d8;"></div>
<span class="t" id="t39" style="top:143px;color:#333;left:1122.95px;--ls:0.587px;">Product</span>
<div class="b" style="left:1339px;top:137px;width:1px;height:31px;background:#d8d8d8;"></div>
<span class="t" id="t40" style="top:143px;color:#333;left:1344.45px;--ls:0.619px;">State</span>
<div class="b" style="left:1514px;top:137px;width:1px;height:31px;background:#d8d8d8;"></div>
<span class="t" id="t41" style="top:143px;color:#333;left:1519.45px;--ls:0.271px;">Supplier</span>
<div class="b" style="left:1733px;top:137px;width:1px;height:31px;background:#d8d8d8;"></div>
<span class="t" id="t42" style="top:143px;color:#333;left:1739.08px;--ls:0.198px;">Warranty en...</span>
<div class="b" style="left:255px;top:168px;width:1589px;height:2px;background:#d0d0d0;"></div>
<div class="b" style="left:255px;top:170px;width:1589px;height:32.5px;background:#f0f4fe;"></div>
<svg class="i" style="left:264.875px;top:180.2px;" width="12.25" height="14" viewBox="0 0 448 512" preserveAspectRatio="none"><path fill="#9a9a9a" d="M400 32H48C21.500 32 0 53.500 0 80v352c0 26.500 21.500 48 48 48h352c26.500 0 48-21.500 48-48V80c0-26.500-21.500-48-48-48zM92 296c-6.600 0-12-5.400-12-12v-56c0-6.600 5.400-12 12-12h264c6.600 0 12 5.400 12 12v56c0 6.600-5.400 12-12 12H92z"/></svg>
<span class="t" id="t43" style="top:177px;left:290.95px;transform:scaleX(0.8718);transform-origin:1.25px 50%;">PC0<span class="n1">1</span></span>
<span class="t" id="t44" style="top:177px;left:510.07px;--ls:0.340px;">Anderson Aaron</span>
<span class="t" id="t45" style="top:177px;left:728.67px;--ls:0.247px;">desktop<span class="n1">1</span>.example</span>
<span class="t" id="t46" style="top:177px;left:903.55px;--ls:-0.794px;">SN45678RTYU567</span>
<span class="t" id="t47" style="top:177px;left:1123.05px;--ls:-0.283px;">Desktop 0<span class="n1">1</span> - HP Pavilion S548...</span>
<svg class="i" style="left:1345px;top:180.15px;" width="13.5" height="13.5" viewBox="0 0 512 512" preserveAspectRatio="none"><path fill="#3434a8" d="M256 8C119 8 8 119 8 256s111 248 248 248 248-111 248-248S393 8 256 8zM124 296c-6.600 0-12-5.400-12-12v-56c0-6.600 5.400-12 12-12h264c6.600 0 12 5.400 12 12v56c0 6.600-5.400 12-12 12H124z"/></svg>
<span class="t" id="t48" style="top:177px;color:#3434a8;left:1361.03px;--ls:0.265px;">In use</span>
<span class="t" id="t49" style="top:177px;left:1518.92px;--ls:-0.220px;">IT GS - IT General Supplies</span>
<span class="t" id="t50" style="top:177px;left:1738.45px;--ls:0.533px;">2022-05-04</span>
<div class="b" style="left:286px;top:203px;width:1px;height:582px;background:#e3e3e3;"></div>
<span class="t" id="t51" style="top:215px;color:#5a5a5a;left:301.65px;--ls:1.150px;">Card</span>
<span class="t" id="t52" style="top:215px;color:#5a5a5a;left:355.05px;--ls:0.567px;">Details</span>
<span class="t" id="t53" style="top:215px;color:#5a5a5a;left:422.15px;--ls:0.506px;">Notes</span>
<span class="t" id="t54" style="top:215px;color:#5a5a5a;left:499.05px;--ls:0.394px;">Relations</span>
<span class="t" id="t55" style="top:215px;color:#5a5a5a;left:582.25px;--ls:0.487px;">History</span>
<span class="t" id="t56" style="top:215px;color:#5a5a5a;left:648.85px;--ls:0.370px;">Emails</span>
<span class="t" id="t57" style="top:215px;color:#0073e6;left:735.17px;--ls:0.925px;">Attachments</span>
<div class="b" style="left:467.3px;top:217.9px;width:16px;height:16px;background:#444;border-radius:50%;"></div>
<span class="t" id="t58" style="top:216px;font-size:11.5px;color:#fff;left:471.62px;transform:scaleX(0.6800);transform-origin:0.88px 50%;">1</span>
<div class="b" style="left:701px;top:217.9px;width:16px;height:16px;background:#444;border-radius:50%;"></div>
<span class="t" id="t59" style="top:216px;font-size:11.5px;color:#fff;left:705.58px;--ls:0.550px;">2</span>
<div class="b" style="left:833.2px;top:217.9px;width:16px;height:16px;background:#0073e6;border-radius:50%;"></div>
<span class="t" id="t60" style="top:216px;font-size:11.5px;color:#fff;left:837.90px;--ls:0.425px;">3</span>
<div class="b" style="left:287px;top:240px;width:1557px;height:1px;background:#d5d5d5;"></div>
<div class="b" style="left:728px;top:239px;width:128px;height:2px;background:#0073e6;"></div>
<svg class="i" style="left:1821.2px;top:220.7px;" width="18" height="16" viewBox="0 0 576 512" preserveAspectRatio="none"><path fill="#333" d="M576 24v127.984c0 21.461-25.960 31.980-40.971 16.971l-35.707-35.709-243.523 243.523c-9.373 9.373-24.568 9.373-33.941 0l-22.627-22.627c-9.373-9.373-9.373-24.569 0-33.941L442.756 76.676l-35.703-35.705C391.982 25.900 402.656 0 424.024 0H552c13.255 0 24 10.745 24 24zM407.029 270.794l-16 16A23.999 23.999 0 0 0 384 303.765V448H64V128h264a24.003 24.003 0 0 0 16.970-7.029l16-16C376.089 89.851 365.381 64 344 64H48C21.490 64 0 85.490 0 112v352c0 26.510 21.490 48 48 48h352c26.510 0 48-21.490 48-48V287.764c0-21.382-25.852-32.090-40.971-16.970z"/></svg>
<div class="b" style="left:295px;top:253px;width:250px;height:32px;border:1px solid #cfcfcf;border-radius:4px;"></div>
<div class="b" style="left:480px;top:253px;width:1px;height:32px;background:#cfcfcf;"></div>
<div class="b" style="left:512px;top:253px;width:1px;height:32px;background:#cfcfcf;"></div>
<span class="t" id="t61" style="top:259px;color:#8c8c8c;left:305.35px;--ls:-0.234px;">Search...</span>
<svg class="i" style="left:488.75px;top:261.25px;" width="15.5" height="15.5" viewBox="0 0 512 512" preserveAspectRatio="none"><path fill="#222" d="M505 442.7L405.3 343c-4.500-4.500-10.600-7-17-7H372c27.600-35.300 44-79.700 44-128C416 93.100 322.900 0 208 0S0 93.100 0 208s93.100 208 208 208c48.300 0 92.700-16.400 128-44v16.300c0 6.400 2.500 12.500 7 17l99.700 99.700c9.400 9.400 24.600 9.400 33.900 0l28.300-28.300c9.400-9.400 9.400-24.600.1-34zM208 336c-70.700 0-128-57.200-128-128 0-70.700 57.200-128 128-128 70.700 0 128 57.200 128 128 0 70.700-57.200 128-128 128z"/></svg>
<svg class="i" style="left:523px;top:261px;" width="11" height="16" viewBox="0 0 352 512" preserveAspectRatio="none"><path fill="#222" d="M242.72 256l100.07-100.07c12.28-12.28 12.28-32.19 0-44.48l-22.24-22.24c-12.28-12.28-32.19-12.28-44.48 0L176 189.28 75.93 89.21c-12.28-12.28-32.19-12.28-44.48 0L9.21 111.45c-12.28 12.28-12.28 32.19 0 44.48L109.28 256 9.21 356.07c-12.28 12.28-12.28 32.19 0 44.48l22.24 22.24c12.28 12.28 32.2 12.28 44.48 0L176 322.72l100.07 100.07c12.28 12.28 32.2 12.28 44.48 0l22.24-22.24c12.28-12.28 12.28-32.19 0-44.48L242.72 256z"/></svg>
<div class="b" style="left:553px;top:252.25px;width:32px;height:33.25px;border:1px solid #cfcfcf;border-radius:4px;"></div>
<svg class="i" style="left:561.25px;top:261.25px;" width="15.5" height="15.5" viewBox="0 0 512 512" preserveAspectRatio="none"><path fill="#222" d="M487.976 0H24.028C2.710 0-8.047 25.866 7.058 40.971L192 225.941V432c0 7.831 3.821 15.170 10.237 19.662l80 55.980C298.020 518.690 320 507.493 320 487.980V225.941l184.947-184.970C520.021 25.896 509.338 0 487.976 0z"/></svg>
<div class="b" style="left:593px;top:252.25px;width:32px;height:33.25px;border:1px solid #cfcfcf;border-radius:4px;"></div>
<svg class="i" style="left:601.25px;top:261.25px;" width="15.5" height="15.5" viewBox="0 0 512 512" preserveAspectRatio="none"><path fill="#222" d="M370.72 133.28C339.458 104.008 298.888 87.962 255.848 88c-77.458.068-144.328 53.178-162.791 126.850-1.344 5.363-6.122 9.150-11.651 9.150H24.103c-7.498 0-13.194-6.807-11.807-14.176C33.933 94.924 134.813 8 256 8c66.448 0 126.791 26.136 171.315 68.685L463.030 40.970C478.149 25.851 504 36.559 504 57.941V192c0 13.255-10.745 24-24 24H345.941c-21.382 0-32.090-25.851-16.971-40.971l41.750-41.749zM32 296h134.059c21.382 0 32.090 25.851 16.971 40.971l-41.750 41.750c31.262 29.273 71.835 45.319 114.876 45.280 77.418-.07 144.315-53.144 162.787-126.849 1.344-5.363 6.122-9.150 11.651-9.150h57.304c7.498 0 13.194 6.807 11.807 14.176C478.067 417.076 377.187 504 256 504c-66.448 0-126.791-26.136-171.315-68.685L48.970 471.030C33.851 486.149 8 475.441 8 454.059V320c0-13.255 10.745-24 24-24z"/></svg>
<div class="b" style="left:633px;top:252.25px;width:32px;height:33.25px;border:1px solid #cfcfcf;border-radius:4px;"></div>
<svg class="i" style="left:642px;top:261px;" width="14" height="16" viewBox="0 0 448 512" preserveAspectRatio="none"><path fill="#222" d="M16 132h416c8.837 0 16-7.163 16-16V76c0-8.837-7.163-16-16-16H16C7.163 60 0 67.163 0 76v40c0 8.837 7.163 16 16 16zm0 160h416c8.837 0 16-7.163 16-16v-40c0-8.837-7.163-16-16-16H16c-8.837 0-16 7.163-16 16v40c0 8.837 7.163 16 16 16zm0 160h416c8.837 0 16-7.163 16-16v-40c0-8.837-7.163-16-16-16H16c-8.837 0-16 7.163-16 16v40c0 8.837 7.163 16 16 16z"/></svg>
<span class="t" id="t62" style="top:254px;font-weight:700;left:1712.50px;--ls:0.014px;">Extended</span>
<span class="t" id="t63" style="top:271px;font-weight:700;left:1712.88px;--ls:0.738px;">data:</span>
<div class="b" style="left:1819px;top:256.2px;width:13.6px;height:13.6px;border:1px solid #767676;border-radius:2.5px;background:#fff;"></div>
<div class="b" style="left:318px;top:296px;width:1px;height:31px;background:#d8d8d8;"></div>
<span class="t" id="t64" style="top:302px;color:#333;left:323.45px;--ls:0.833px;">Code</span>
<div class="b" style="left:751px;top:296px;width:1px;height:31px;background:#d8d8d8;"></div>
<span class="t" id="t65" style="top:302px;color:#333;left:755.95px;--ls:0.533px;">Description</span>
<div class="b" style="left:1185px;top:296px;width:1px;height:31px;background:#d8d8d8;"></div>
<span class="t" id="t66" style="top:302px;color:#333;left:1189.95px;--ls:0.350px;">File name</span>
<div class="b" style="left:1618px;top:296px;width:1px;height:31px;background:#d8d8d8;"></div>
<span class="t" id="t67" style="top:302px;color:#333;left:1624.08px;--ls:0.450px;">Version</span>
<div class="b" style="left:1748px;top:296px;width:1px;height:31px;background:#d8d8d8;"></div>
<span class="t" id="t68" style="top:302px;color:#333;left:1752.95px;--ls:0.246px;">Preview</span>
<div class="b" style="left:287px;top:327px;width:1557px;height:2px;background:#d0d0d0;"></div>
<div class="b" style="left:287px;top:329px;width:1557px;height:29px;background:#eeeeee;"></div>
<span class="t" id="t69" style="top:334px;font-weight:700;color:#555;font-style:italic;left:297.35px;--ls:0.065px;">Administrative documents (3)</span>
<div class="b" style="left:318px;top:358px;width:1px;height:417px;background:#e3e3e3;"></div>
<svg class="i" style="left:297.075px;top:366.9px;" width="12.25" height="14" viewBox="0 0 448 512" preserveAspectRatio="none"><path fill="#9a9a9a" d="M400 32H48C21.500 32 0 53.500 0 80v352c0 26.500 21.500 48 48 48h352c26.500 0 48-21.500 48-48V80c0-26.500-21.500-48-48-48zM92 296c-6.600 0-12-5.400-12-12v-56c0-6.600 5.400-12 12-12h264c6.600 0 12 5.400 12 12v56c0 6.600-5.400 12-12 12H92z"/></svg>
<span class="t" id="t70" style="top:364px;left:322.73px;transform:scaleX(0.8821);transform-origin:1.38px 50%;">INV0<span class="n1">1</span></span>
<span class="t" id="t71" style="top:364px;left:755.95px;--ls:0.388px;">Purchase invoice</span>
<span class="t" id="t72" style="top:364px;left:1189.83px;--ls:0.533px;">Invoice.png</span>
<span class="t" id="t73" style="top:364px;transform:scaleX(0.94);transform-origin:0 50%;left:1622.40px;"><span style="letter-spacing:-1.5px">1</span><span style="letter-spacing:-1.25px">.</span>0</span>
<span class="t" id="t74" style="top:461px;color:#5a5a5a;left:333.98px;--ls:1.019px;">Attachment</span>
<span class="t" id="t75" style="top:461px;color:#0073e6;left:437.05px;--ls:0.454px;">History</span>
<div class="b" style="left:319px;top:486px;width:1525px;height:1px;background:#d5d5d5;"></div>
<div class="b" style="left:431px;top:485px;width:63px;height:2px;background:#0073e6;"></div>
<span class="t" id="t76" style="top:504px;color:#333;left:333.35px;--ls:0.631px;">Creation date</span>
<div class="b" style="left:538px;top:498px;width:1px;height:31px;background:#d8d8d8;"></div>
<span class="t" id="t77" style="top:504px;color:#333;left:542.95px;--ls:0.638px;">Modification date</span>
<div class="b" style="left:749px;top:498px;width:1px;height:31px;background:#d8d8d8;"></div>
<span class="t" id="t78" style="top:504px;color:#333;left:755.08px;--ls:0.525px;">Author</span>
<div class="b" style="left:959px;top:498px;width:1px;height:31px;background:#d8d8d8;"></div>
<span class="t" id="t79" style="top:504px;color:#333;left:965.08px;--ls:0.501px;">Author description</span>
<div class="b" style="left:1169.8px;top:498px;width:1px;height:31px;background:#d8d8d8;"></div>
<span class="t" id="t80" style="top:504px;color:#333;left:1175.88px;--ls:0.417px;">Version</span>
<div class="b" style="left:1381px;top:498px;width:1px;height:31px;background:#d8d8d8;"></div>
<span class="t" id="t81" style="top:504px;color:#333;left:1385.95px;--ls:0.350px;">File name</span>
<div class="b" style="left:1592px;top:498px;width:1px;height:31px;background:#d8d8d8;"></div>
<span class="t" id="t82" style="top:504px;color:#333;left:1596.95px;--ls:0.533px;">Description</span>
<div class="b" style="left:1803px;top:498px;width:1px;height:31px;background:#d8d8d8;"></div>
<svg class="i" style="left:437.194px;top:507.45px;" width="11.8125" height="13.5" viewBox="0 0 448 512" preserveAspectRatio="none"><path fill="#8f8f8f" d="M176 352h-48V48a16 16 0 0 0-16-16H80a16 16 0 0 0-16 16v304H16c-14.190 0-21.360 17.240-11.290 27.310l80 96a16 16 0 0 0 22.620 0l80-96C197.350 369.260 190.220 352 176 352zm240-64H288a16 16 0 0 0-16 16v32a16 16 0 0 0 16 16h56l-61.260 70.450A32 32 0 0 0 272 446.370V464a16 16 0 0 0 16 16h128a16 16 0 0 0 16-16v-32a16 16 0 0 0-16-16h-56l61.260-70.450A32 32 0 0 0 432 321.630V304a16 16 0 0 0-16-16zm31.060-85.380l-59.270-160A16 16 0 0 0 372.720 32h-41.440a16 16 0 0 0-15.070 10.620l-59.270 160A16 16 0 0 0 272 224h24.830a16 16 0 0 0 15.230-11.080l4.420-12.920h71l4.410 12.920A16 16 0 0 0 407.160 224H432a16 16 0 0 0 15.060-21.380zM335.610 144L352 96l16.390 48z"/></svg>
<div class="b" style="left:329px;top:529px;width:1505px;height:2px;background:#d0d0d0;"></div>
<span class="t" id="t83" style="top:538px;left:333.38px;--ls:-0.536px;"><span class="n1">1</span>3/03/2026 <span class="n1">1</span>2:28:<span class="n1">1</span>2</span>
<span class="t" id="t84" style="top:538px;left:543.48px;--ls:-0.536px;"><span class="n1">1</span>3/03/2026 <span class="n1">1</span>2:28:<span class="n1">1</span>2</span>
<span class="t" id="t85" style="top:538px;left:754.58px;--ls:1.463px;">admin</span>
<span class="t" id="t86" style="top:538px;left:964.48px;--ls:1.463px;">admin</span>
<span class="t" id="t87" style="top:538px;transform:scaleX(0.94);transform-origin:0 50%;left:1174.30px;"><span style="letter-spacing:-1.5px">1</span><span style="letter-spacing:-1.25px">.</span>0</span>
<span class="t" id="t88" style="top:538px;left:1385.83px;--ls:0.533px;">Invoice.png</span>
<span class="t" id="t89" style="top:538px;left:1597.05px;--ls:0.388px;">Purchase invoice</span>
<svg class="i" style="left:1811px;top:539.2px;" width="17" height="17" viewBox="0 0 512 512" preserveAspectRatio="none"><path fill="#9a9a9a" d="M216 0h80c13.300 0 24 10.700 24 24v168h87.700c17.800 0 26.700 21.500 14.100 34.100L269.700 378.300c-7.500 7.500-19.800 7.500-27.300 0L90.100 226.100c-12.600-12.600-3.700-34.100 14.100-34.100H192V24c0-13.300 10.700-24 24-24zm296 376v112c0 13.300-10.700 24-24 24H24c-13.300 0-24-10.700-24-24V376c0-13.300 10.700-24 24-24h146.700l49 49c20.100 20.100 52.500 20.100 72.600 0l49-49H488c13.300 0 24 10.700 24 24zm-124 88c0-11-9-20-20-20s-20 9-20 20 9 20 20 20 20-9 20-20zm64 0c0-11-9-20-20-20s-20 9-20 20 9 20 20 20 20-9 20-20z"/></svg>
<div class="b" style="left:329px;top:563px;width:1505px;height:1px;background:#e6e6e6;"></div>
<div class="b" style="left:319px;top:715px;width:1525px;height:1px;background:#02002e;"></div>
<div class="b" style="left:287px;top:716px;width:1557px;height:1px;background:#e6e9f3;"></div>
<svg class="i" style="left:297.075px;top:725px;" width="12.25" height="14" viewBox="0 0 448 512" preserveAspectRatio="none"><path fill="#9a9a9a" d="M400 32H48C21.500 32 0 53.500 0 80v352c0 26.500 21.500 48 48 48h352c26.500 0 48-21.500 48-48V80c0-26.500-21.500-48-48-48zm-32 252c0 6.600-5.400 12-12 12h-92v92c0 6.600-5.400 12-12 12h-56c-6.600 0-12-5.400-12-12v-92H92c-6.600 0-12-5.400-12-12v-56c0-6.600 5.400-12 12-12h92v-92c0-6.600 5.400-12 12-12h56c6.600 0 12 5.400 12 12v92h92c6.600 0 12 5.400 12 12v56z"/></svg>
<span class="t" id="t90" style="top:723px;left:323.45px;transform:scaleX(0.8976);transform-origin:0.75px 50%;">ODA0<span class="n1">1</span></span>
<span class="t" id="t91" style="top:723px;left:755.95px;--ls:0.413px;">Purchase order</span>
<span class="t" id="t92" style="top:723px;left:1190.45px;--ls:0.537px;">Order.png</span>
<span class="t" id="t93" style="top:723px;transform:scaleX(0.94);transform-origin:0 50%;left:1622.40px;"><span style="letter-spacing:-1.5px">1</span><span style="letter-spacing:-1.25px">.</span>0</span>
<div class="b" style="left:287px;top:784px;width:1557px;height:1px;background:#02002e;"></div>
<svg class="i" style="left:1750px;top:360px" width="84" height="84" viewBox="0 0 84 84"><text x="9.07" y="11.32" font-family="Liberation Sans,sans-serif" font-weight="700" font-size="5.29" fill="#343a78" textLength="17.87" lengthAdjust="spacingAndGlyphs">INVOICE</text><ellipse cx="69.32" cy="10.76" rx="4.77" ry="2.81" fill="#a4a7b3"/><rect x="9.07" y="13.21" width="9.64" height="0.7" fill="#8e93a8"/><rect x="9.07" y="14.62" width="11.04" height="0.7" fill="#b9bdca"/><rect x="9.07" y="16.02" width="12.44" height="0.7" fill="#a3a8b8"/><rect x="9.07" y="19.11" width="4.96" height="0.7" fill="#6a70a0"/><rect x="29.93" y="19.11" width="5.14" height="0.7" fill="#6a70a0"/><rect x="50.05" y="19.11" width="6.08" height="0.7" fill="#6a70a0"/><rect x="69.22" y="19.11" width="4.68" height="0.7" fill="#a3a8b8"/><rect x="9.07" y="20.7" width="6.36" height="0.7" fill="#b9bdca"/><rect x="29.93" y="20.7" width="6.55" height="0.7" fill="#b9bdca"/><rect x="50.05" y="20.79" width="8.42" height="0.7" fill="#8388b4"/><rect x="67.82" y="21.07" width="6.08" height="0.7" fill="#b9bdca"/><rect x="9.07" y="22.01" width="8.7" height="0.7" fill="#a3a8b8"/><rect x="29.93" y="22.01" width="11.23" height="0.7" fill="#a3a8b8"/><rect x="50.05" y="22.19" width="3.27" height="0.7" fill="#9da2c6"/><rect x="9.07" y="23.22" width="12.44" height="0.7" fill="#b9bdca"/><rect x="29.93" y="23.22" width="13.1" height="0.7" fill="#b9bdca"/><rect x="50.05" y="24.01" width="6.08" height="1.0" fill="#7d83b0"/><rect x="66.88" y="23.6" width="7.02" height="0.7" fill="#b9bdca"/><rect x="66.88" y="24.91" width="7.02" height="0.7" fill="#b9bdca"/><rect x="9.07" y="27.32" width="64.83" height="3.18" fill="#fbf1f2"/><rect x="9.07" y="27.16" width="64.83" height="0.5" fill="#efc9cc"/><rect x="9.07" y="30.25" width="64.83" height="0.5" fill="#efc9cc"/><rect x="11.23" y="28.93" width="2.34" height="0.7" fill="#6a70a0"/><rect x="26.66" y="28.93" width="7.95" height="0.7" fill="#6a70a0"/><rect x="49.58" y="28.93" width="6.55" height="0.7" fill="#6a70a0"/><rect x="67.82" y="28.93" width="5.14" height="0.7" fill="#6a70a0"/><rect x="11.69" y="31.17" width="1.87" height="0.7" fill="#b9bdca"/><rect x="16.84" y="31.17" width="15.43" height="0.7" fill="#8e93a8"/><rect x="52.85" y="31.17" width="3.74" height="0.7" fill="#a3a8b8"/><rect x="69.22" y="31.17" width="3.74" height="0.7" fill="#a3a8b8"/><rect x="11.69" y="33.42" width="1.87" height="0.7" fill="#b9bdca"/><rect x="16.84" y="33.42" width="12.63" height="0.7" fill="#8e93a8"/><rect x="53.32" y="33.42" width="3.27" height="0.7" fill="#a3a8b8"/><rect x="69.69" y="33.42" width="3.27" height="0.7" fill="#a3a8b8"/><rect x="11.69" y="35.95" width="1.87" height="0.7" fill="#b9bdca"/><rect x="16.84" y="35.95" width="6.08" height="0.7" fill="#8e93a8"/><rect x="53.79" y="35.95" width="2.81" height="0.7" fill="#a3a8b8"/><rect x="69.69" y="35.95" width="3.27" height="0.7" fill="#a3a8b8"/><rect x="50.98" y="38.94" width="5.61" height="0.7" fill="#a3a8b8"/><rect x="68.76" y="38.94" width="4.21" height="0.7" fill="#a3a8b8"/><rect x="46.3" y="41.09" width="10.29" height="0.7" fill="#b9bdca"/><rect x="69.69" y="41.09" width="3.27" height="0.7" fill="#b9bdca"/><rect x="51.92" y="43.19" width="4.21" height="1.0" fill="#7d83b0"/><rect x="66.42" y="43.19" width="6.55" height="1.0" fill="#7d83b0"/><rect x="43.03" y="68.64" width="13.1" height="0.8" fill="#e3a9a4"/><rect x="41.81" y="68.29" width="0.28" height="6.55" fill="#c9ccd8"/><rect x="43.03" y="71.87" width="16.84" height="0.7" fill="#8e93a8"/><rect x="43.03" y="74.21" width="27.13" height="0.7" fill="#8e93a8"/><path d="M630 545C640 520 655 505 658 515S645 560 642 580M625 540C660 530 690 545 705 535S720 520 730 535 760 530 790 545" transform="scale(0.09355)" stroke="#222" stroke-width="9" fill="none" stroke-linecap="round"/><path d="M180 770C190 760 200 765 205 780S190 800 215 795M215 790C240 770 250 795 270 790S300 770 325 795M355 800C370 780 385 800 400 792S420 790 440 795M360 812C350 805 362 800 372 806" transform="scale(0.09355)" stroke="#3a4080" stroke-width="10" fill="none" stroke-linecap="round"/></svg>
<svg class="i" style="left:1750px;top:716px" width="84" height="84" viewBox="0 0 84 84"><text x="9.2" y="14.26" font-family="Liberation Sans,sans-serif" font-weight="700" font-size="5.38" fill="#343a78" textLength="20.03" lengthAdjust="spacingAndGlyphs">FATTURA</text><ellipse cx="69.37" cy="13.64" rx="4.68" ry="3.12" fill="#a4a7b3"/><rect x="9.2" y="16.17" width="11.85" height="0.7" fill="#8e93a8"/><rect x="9.2" y="17.42" width="12.63" height="0.7" fill="#b9bdca"/><rect x="9.2" y="18.9" width="14.58" height="0.7" fill="#a3a8b8"/><rect x="9.2" y="22.05" width="7.17" height="0.8" fill="#6a70a0"/><rect x="30.01" y="22.05" width="6.24" height="0.8" fill="#6a70a0"/><rect x="49.88" y="22.05" width="7.01" height="0.8" fill="#6a70a0"/><rect x="69.76" y="22.1" width="3.9" height="0.7" fill="#a3a8b8"/><rect x="9.2" y="23.66" width="7.95" height="0.7" fill="#b9bdca"/><rect x="30.01" y="23.66" width="7.4" height="0.7" fill="#b9bdca"/><rect x="49.88" y="23.81" width="10.52" height="0.7" fill="#8388b4"/><rect x="67.03" y="23.97" width="6.63" height="0.7" fill="#b9bdca"/><rect x="9.2" y="24.9" width="8.34" height="0.7" fill="#a3a8b8"/><rect x="30.01" y="24.9" width="8.96" height="0.7" fill="#a3a8b8"/><rect x="49.88" y="25.37" width="3.12" height="0.7" fill="#9da2c6"/><rect x="9.2" y="26.23" width="10.68" height="0.7" fill="#b9bdca"/><rect x="30.01" y="26.23" width="10.91" height="0.7" fill="#b9bdca"/><rect x="49.88" y="27.17" width="11.69" height="1.0" fill="#7d83b0"/><rect x="67.81" y="26.15" width="5.85" height="0.7" fill="#b9bdca"/><rect x="67.42" y="27.71" width="6.24" height="0.7" fill="#b9bdca"/><rect x="9.2" y="30.15" width="64.46" height="0.5" fill="#efc9cc"/><rect x="9.2" y="34.04" width="64.46" height="0.5" fill="#efc9cc"/><rect x="11.54" y="31.84" width="2.49" height="0.7" fill="#6a70a0"/><rect x="26.5" y="31.84" width="7.79" height="0.7" fill="#6a70a0"/><rect x="48.71" y="31.61" width="7.4" height="0.7" fill="#6a70a0"/><rect x="53.0" y="33.01" width="3.12" height="0.7" fill="#6a70a0"/><rect x="68.2" y="31.84" width="4.68" height="0.7" fill="#6a70a0"/><rect x="11.69" y="35.5" width="2.34" height="0.7" fill="#b9bdca"/><rect x="16.76" y="35.5" width="15.59" height="0.7" fill="#8e93a8"/><rect x="52.61" y="35.35" width="3.9" height="0.7" fill="#a3a8b8"/><rect x="68.98" y="35.35" width="3.9" height="0.7" fill="#a3a8b8"/><rect x="11.69" y="38.0" width="2.34" height="0.7" fill="#b9bdca"/><rect x="16.76" y="38.0" width="15.59" height="0.7" fill="#8e93a8"/><rect x="53.0" y="38.0" width="3.51" height="0.7" fill="#a3a8b8"/><rect x="69.37" y="38.0" width="3.51" height="0.7" fill="#a3a8b8"/><rect x="11.69" y="40.18" width="2.34" height="0.7" fill="#a3a8b8"/><rect x="16.76" y="40.18" width="8.18" height="0.7" fill="#70758e"/><rect x="53.39" y="40.18" width="3.12" height="0.7" fill="#8e93a8"/><rect x="69.37" y="40.18" width="3.51" height="0.7" fill="#8e93a8"/><rect x="50.66" y="43.14" width="5.85" height="0.7" fill="#a3a8b8"/><rect x="68.98" y="43.14" width="3.9" height="0.7" fill="#a3a8b8"/><rect x="50.27" y="45.25" width="5.85" height="0.7" fill="#b9bdca"/><rect x="69.76" y="45.25" width="3.12" height="0.7" fill="#b9bdca"/><rect x="51.44" y="47.82" width="4.68" height="1.0" fill="#7d83b0"/><rect x="66.64" y="47.82" width="6.24" height="1.0" fill="#7d83b0"/><path d="M745 700C750 680 760 670 765 685S755 730 775 745M790 740C780 700 800 670 805 690S800 730 810 745M760 720C800 690 850 700 945 685M800 725C850 715 900 705 945 712M780 735H900" transform="scale(0.07794)" stroke="#222" stroke-width="11" fill="none" stroke-linecap="round"/></svg>
<div class="b" style="left:255px;top:785px;width:1589px;height:32.6px;background:#f5f5f5;"></div>
<svg class="i" style="left:264.875px;top:794.4px;" width="12.25" height="14" viewBox="0 0 448 512" preserveAspectRatio="none"><path fill="#9a9a9a" d="M400 32H48C21.500 32 0 53.500 0 80v352c0 26.500 21.500 48 48 48h352c26.500 0 48-21.500 48-48V80c0-26.500-21.500-48-48-48zm-32 252c0 6.600-5.400 12-12 12h-92v92c0 6.600-5.400 12-12 12h-56c-6.600 0-12-5.400-12-12v-92H92c-6.600 0-12-5.400-12-12v-56c0-6.600 5.400-12 12-12h92v-92c0-6.600 5.400-12 12-12h56c6.600 0 12 5.400 12 12v92h92c6.600 0 12 5.400 12 12v56z"/></svg>
<span class="t" id="t94" style="top:792px;left:290.95px;--ls:-0.300px;">PC02</span>
<span class="t" id="t95" style="top:792px;left:508.95px;--ls:-0.078px;">Rossi Mario</span>
<span class="t" id="t96" style="top:792px;left:728.67px;--ls:0.413px;">desktop2.example</span>
<span class="t" id="t97" style="top:792px;left:903.05px;--ls:-0.425px;">E65995C<span class="n1">1</span>2454<span class="n1">1</span>M</span>
<span class="t" id="t98" style="top:792px;left:1123.05px;--ls:-0.283px;">Desktop 0<span class="n1">1</span> - HP Pavilion S548...</span>
<svg class="i" style="left:1345px;top:795.15px;" width="13.5" height="13.5" viewBox="0 0 512 512" preserveAspectRatio="none"><path fill="#3434a8" d="M256 8C119 8 8 119 8 256s111 248 248 248 248-111 248-248S393 8 256 8zM124 296c-6.600 0-12-5.400-12-12v-56c0-6.600 5.400-12 12-12h264c6.600 0 12 5.400 12 12v56c0 6.600-5.400 12-12 12H124z"/></svg>
<span class="t" id="t99" style="top:792px;color:#3434a8;left:1361.03px;--ls:0.265px;">In use</span>
<span class="t" id="t100" style="top:792px;left:1519.55px;--ls:-0.261px;">SPL - Spare Parts Ltd</span>
<span class="t" id="t101" style="top:792px;left:1738.45px;--ls:-0.042px;">2023-<span class="n1">1</span>2-23</span>
<div class="b" style="left:255px;top:817px;width:1589px;height:1px;background:#e4e4e4;"></div>
<svg class="i" style="left:264.875px;top:827px;" width="12.25" height="14" viewBox="0 0 448 512" preserveAspectRatio="none"><path fill="#9a9a9a" d="M400 32H48C21.500 32 0 53.500 0 80v352c0 26.500 21.500 48 48 48h352c26.500 0 48-21.500 48-48V80c0-26.500-21.500-48-48-48zm-32 252c0 6.600-5.400 12-12 12h-92v92c0 6.600-5.400 12-12 12h-56c-6.600 0-12-5.400-12-12v-92H92c-6.600 0-12-5.400-12-12v-56c0-6.600 5.400-12 12-12h92v-92c0-6.600 5.400-12 12-12h56c6.600 0 12 5.400 12 12v92h92c6.600 0 12 5.400 12 12v56z"/></svg>
<span class="t" id="t102" style="top:824px;left:290.95px;--ls:-0.342px;">PC03</span>
<span class="t" id="t103" style="top:824px;left:509.45px;--ls:0.577px;">Colding Conrad</span>
<span class="t" id="t104" style="top:824px;left:728.67px;--ls:0.413px;">desktop3.example</span>
<span class="t" id="t105" style="top:824px;left:903.05px;--ls:-0.288px;">R22642G269894Z</span>
<span class="t" id="t106" style="top:824px;left:1123.05px;--ls:-0.283px;">Desktop 0<span class="n1">1</span> - HP Pavilion S548...</span>
<svg class="i" style="left:1345px;top:827.75px;" width="13.5" height="13.5" viewBox="0 0 512 512" preserveAspectRatio="none"><path fill="#3434a8" d="M256 8C119 8 8 119 8 256s111 248 248 248 248-111 248-248S393 8 256 8zM124 296c-6.600 0-12-5.400-12-12v-56c0-6.600 5.400-12 12-12h264c6.600 0 12 5.400 12 12v56c0 6.600-5.400 12-12 12H124z"/></svg>
<span class="t" id="t107" style="top:824px;color:#3434a8;left:1361.03px;--ls:0.265px;">In use</span>
<span class="t" id="t108" style="top:824px;left:1519.55px;--ls:-0.261px;">SPL - Spare Parts Ltd</span>
<span class="t" id="t109" style="top:824px;left:1738.45px;--ls:-0.347px;">2022-07-<span class="n1">1</span><span class="n1">1</span></span>
<div class="b" style="left:255px;top:849.8px;width:1589px;height:1px;background:#e4e4e4;"></div>
<div class="b" style="left:255px;top:850.2px;width:1589px;height:32.6px;background:#f5f5f5;"></div>
<svg class="i" style="left:264.875px;top:859.6px;" width="12.25" height="14" viewBox="0 0 448 512" preserveAspectRatio="none"><path fill="#9a9a9a" d="M400 32H48C21.500 32 0 53.500 0 80v352c0 26.500 21.500 48 48 48h352c26.500 0 48-21.500 48-48V80c0-26.500-21.500-48-48-48zm-32 252c0 6.600-5.400 12-12 12h-92v92c0 6.600-5.400 12-12 12h-56c-6.600 0-12-5.400-12-12v-92H92c-6.600 0-12-5.400-12-12v-56c0-6.600 5.400-12 12-12h92v-92c0-6.600 5.400-12 12-12h56c6.600 0 12 5.400 12 12v92h92c6.600 0 12 5.400 12 12v56z"/></svg>
<span class="t" id="t110" style="top:857px;left:290.95px;--ls:-0.225px;">PC04</span>
<span class="t" id="t111" style="top:857px;left:509.45px;--ls:0.294px;">Gray Jude</span>
<span class="t" id="t112" style="top:857px;left:728.67px;--ls:0.473px;">desktop4.example</span>
<span class="t" id="t113" style="top:857px;left:903.05px;--ls:-0.115px;">F25452Q986323N</span>
<span class="t" id="t114" style="top:857px;left:1123.05px;--ls:-0.356px;">MacBookPro - Apple <span class="n1">1</span>3 MVK5<span class="n1">1</span>...</span>
<svg class="i" style="left:1345px;top:860.35px;" width="13.5" height="13.5" viewBox="0 0 512 512" preserveAspectRatio="none"><path fill="#3434a8" d="M256 8C119 8 8 119 8 256s111 248 248 248 248-111 248-248S393 8 256 8zM124 296c-6.600 0-12-5.400-12-12v-56c0-6.600 5.400-12 12-12h264c6.600 0 12 5.400 12 12v56c0 6.600-5.400 12-12 12H124z"/></svg>
<span class="t" id="t115" style="top:857px;color:#3434a8;left:1361.03px;--ls:0.265px;">In use</span>
<span class="t" id="t116" style="top:857px;left:1519.55px;--ls:-0.261px;">SPL - Spare Parts Ltd</span>
<span class="t" id="t117" style="top:857px;left:1738.45px;--ls:0.050px;">2022-08-3<span class="n1">1</span></span>
<div class="b" style="left:255px;top:882.3px;width:1589px;height:1px;background:#e4e4e4;"></div>
<svg class="i" style="left:264.875px;top:892.2px;" width="12.25" height="14" viewBox="0 0 448 512" preserveAspectRatio="none"><path fill="#9a9a9a" d="M400 32H48C21.500 32 0 53.500 0 80v352c0 26.500 21.500 48 48 48h352c26.500 0 48-21.500 48-48V80c0-26.500-21.500-48-48-48zm-32 252c0 6.600-5.400 12-12 12h-92v92c0 6.600-5.400 12-12 12h-56c-6.600 0-12-5.400-12-12v-92H92c-6.600 0-12-5.400-12-12v-56c0-6.600 5.400-12 12-12h92v-92c0-6.600 5.400-12 12-12h56c6.600 0 12 5.400 12 12v92h92c6.600 0 12 5.400 12 12v56z"/></svg>
<span class="t" id="t118" style="top:890px;left:290.95px;--ls:-0.208px;">PC05</span>
<span class="t" id="t119" style="top:890px;left:509.45px;--ls:0.292px;">Smith John</span>
<span class="t" id="t120" style="top:890px;left:728.67px;--ls:0.453px;">desktop5.example</span>
<span class="t" id="t121" style="top:890px;left:903.92px;--ls:-0.317px;">T25455F365325A</span>
<span class="t" id="t122" style="top:890px;left:1122.92px;--ls:-0.393px;">IMac - Apple MMQA2T C56<span class="n1">1</span>46...</span>
<svg class="i" style="left:1345px;top:892.9499999999999px" width="13.5" height="13.5" viewBox="0 0 512 512"><circle cx="256" cy="256" r="248" fill="#e00000"/><path d="M216 110h80l-12 190h-56zM256 330a40 40 0 1 0 0.100 0z" fill="#fff"/></svg>
<span class="t" id="t123" style="top:890px;color:#e00000;left:1361.15px;--ls:0.690px;">Maintenance</span>
<span class="t" id="t124" style="top:890px;left:1519.55px;--ls:-0.261px;">SPL - Spare Parts Ltd</span>
<span class="t" id="t125" style="top:890px;left:1738.45px;--ls:0.428px;">2023-06-07</span>
<div class="b" style="left:286px;top:785px;width:1px;height:113px;background:#e0e0e0;"></div>
<div class="b" style="left:255px;top:785px;width:31px;height:1px;background:#e6e9f3;"></div>
<div class="b" style="left:286px;top:170px;width:1px;height:33px;background:#dcdde2;"></div>
</div>
</body></html>
